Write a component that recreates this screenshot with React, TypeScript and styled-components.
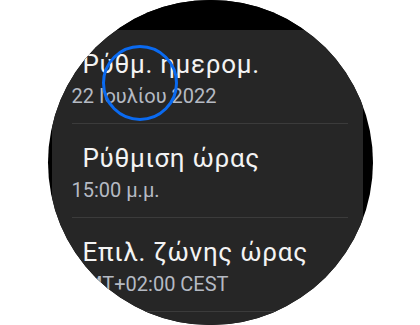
import React from 'react'
import styled, { createGlobalStyle } from 'styled-components'

const GlobalStyle = createGlobalStyle`
  html, body {
    margin: 0;
    padding: 0;
    background: #ffffff;
  }
  body {
    font-family: Roboto, "Noto Sans", "DejaVu Sans", sans-serif;
  }
`

const Page = styled.main`
  width: 420px;
  height: 325px;
  display: flex;
  justify-content: center;
  overflow: hidden;
`

const Watch = styled.section`
  position: relative;
  width: 325px;
  height: 325px;
  flex-shrink: 0;
  border-radius: 50%;
  overflow: hidden;
  background: #000000;
  display: flex;
  flex-direction: column;
`

const TopBar = styled.div`
  height: 30px;
  flex-shrink: 0;
  background: #000000;
`

const Panel = styled.div`
  flex: 1;
  margin: 0 10px 0 4px;
  background: #262626;
  display: flex;
  flex-direction: column;
`

const Row = styled.div`
  margin: 0 15px 0 20px;
  padding: 19px 0 15px;
  border-bottom: 1px solid #3b3b3b;
  display: flex;
  flex-direction: column;
`

const Title = styled.div`
  padding-left: 11px;
  font-size: 26px;
  line-height: 30px;
  letter-spacing: 0.7px;
  color: #f3f3f3;
  white-space: nowrap;
`

const Sub = styled.div`
  margin-top: 5px;
  font-size: 20px;
  line-height: 24px;
  color: #b5bac3;
  white-space: nowrap;
`

const Highlight = styled.div`
  position: absolute;
  left: 54px;
  top: 45px;
  width: 76px;
  height: 76px;
  box-sizing: border-box;
  border: 3.5px solid #0a6af0;
  border-radius: 50%;
  pointer-events: none;
`

const items = [
  { title: 'Ρύθμ. ημερομ.', sub: '22 Ιουλίου 2022' },
  { title: 'Ρύθμιση ώρας', sub: '15:00 μ.μ.' },
  { title: 'Επιλ. ζώνης ώρας', sub: 'GMT+02:00 CEST' },
]

const App = () => {
  return (
    <>
      <GlobalStyle />
      <Page>
        <Watch>
          <TopBar />
          <Panel>
            {items.map((item) => (
              <Row key={item.title}>
                <Title>{item.title}</Title>
                <Sub>{item.sub}</Sub>
              </Row>
            ))}
          </Panel>
          <Highlight />
        </Watch>
      </Page>
    </>
  )
}

export default App
